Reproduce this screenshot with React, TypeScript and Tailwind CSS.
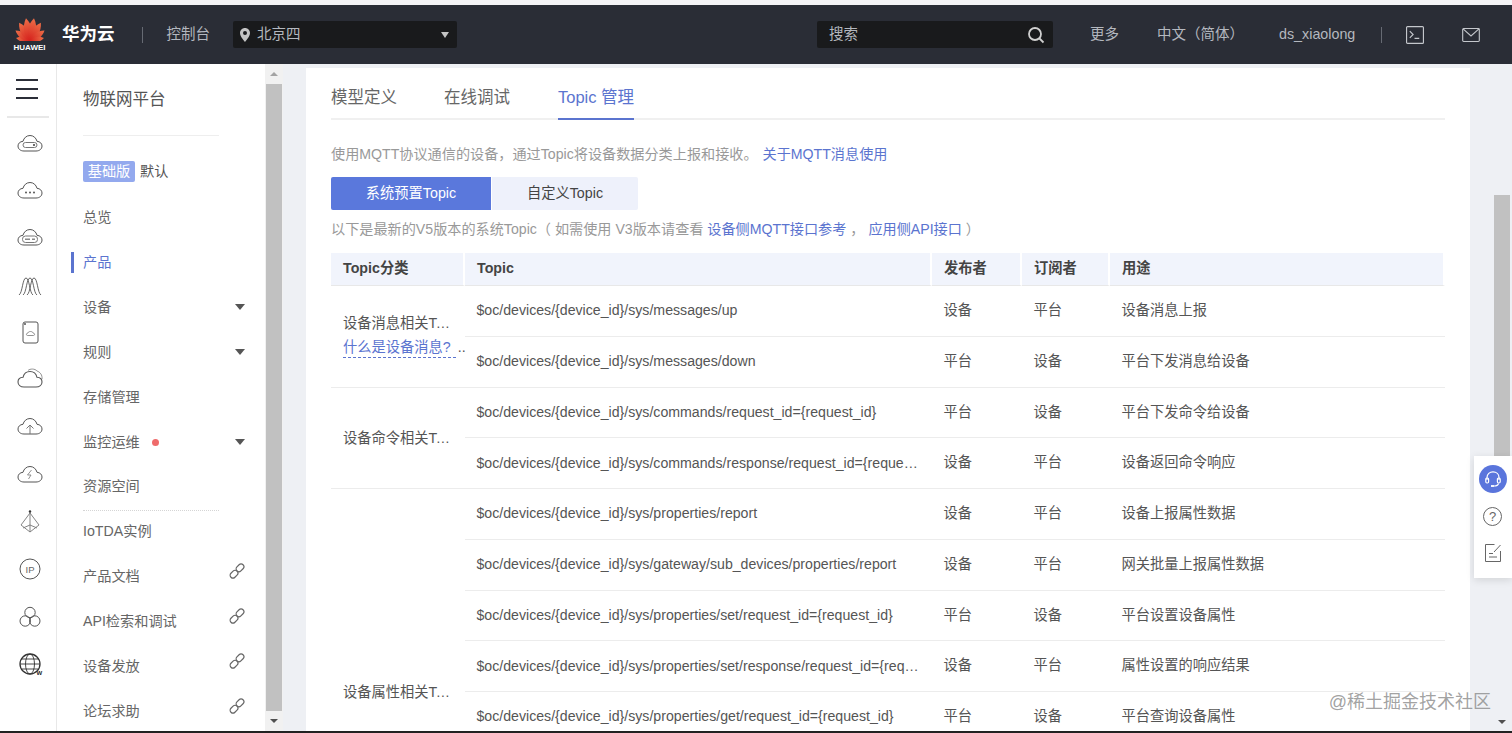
import React from "react";

const cloud = "M8 21C4.5 21 2 19 2 16C2 13.5 4 11.5 7 11.3C7.8 8 10.5 5.5 14 5.5C17.5 5.5 20.2 8 21 11.3C24 11.5 26 13.5 26 16C26 19 23.5 21 20 21Z";

function RailIcon({ children }: { children: React.ReactNode }) {
  return (
    <div className="flex h-[47.3px] items-center justify-center pl-[3px]">
      <svg width="28" height="28" viewBox="0 0 28 28" fill="none" stroke="#555" strokeWidth="1">
        {children}
      </svg>
    </div>
  );
}

function Rail() {
  return (
    <div className="w-[57px] shrink-0 border-r border-[#e8e8e8] bg-white">
      <div className="mx-[7px] flex h-[54px] flex-col items-center justify-center gap-[6.5px] border-b-2 border-[#e8e8e8] pb-[2px] pr-[2px]">
        <div className="h-[2.5px] w-[22px] bg-[#2b2e38]" />
        <div className="h-[2.5px] w-[22px] bg-[#2b2e38]" />
        <div className="h-[2.5px] w-[22px] bg-[#2b2e38]" />
      </div>
      <div className="pt-[2px]">
        <RailIcon>
          <path d={cloud} />
          <rect x="7" y="12.5" width="14" height="5" rx="2.5" stroke="#777" />
          <circle cx="18" cy="15" r="0.7" fill="#555" />
        </RailIcon>
        <RailIcon>
          <path d={cloud} />
          <circle cx="10" cy="15.5" r="1" fill="#555" stroke="none" />
          <circle cx="14" cy="15.5" r="1" fill="#555" stroke="none" />
          <circle cx="18" cy="15.5" r="1" fill="#555" stroke="none" />
        </RailIcon>
        <RailIcon>
          <path d={cloud} />
          <rect x="6.5" y="12" width="15" height="6.5" rx="3" stroke="#777" />
          <path d="M9 15.2h5M16 15.2h3" stroke="#888" strokeWidth="1.4" />
        </RailIcon>
        <RailIcon>
          <path d="M3 23C6.5 21 6.5 6 10 6C13.5 6 13.5 21 17 23M7 23C10.5 21 10.5 6 14 6C17.5 6 17.5 21 21 23M11 23C14.5 21 14.5 6 18 6C21.5 6 21.5 21 25 23" strokeWidth="0.9" />
        </RailIcon>
        <RailIcon>
          <rect x="7" y="3" width="15" height="21" rx="2" />
          <circle cx="9" cy="5" r="0.6" fill="#555" />
          <path d="M11.5 16.5C10 16.5 10 14 12 14C12.3 12 16.7 12 17 14C19 14 19 16.5 17.5 16.5Z" strokeWidth="0.8" stroke="#777" />
        </RailIcon>
        <RailIcon>
          <path d="M12 4.5C14 2.5 19 2.5 21 5C24 6 26.5 9 26 13" strokeWidth="0.9" stroke="#888" />
          <path d={cloud} strokeWidth="1.1" />
        </RailIcon>
        <RailIcon>
          <path d={cloud} />
          <path d="M14 21V12M10.5 15.5L14 12L17.5 15.5" stroke="#777" />
        </RailIcon>
        <RailIcon>
          <path d={cloud} />
          <path d="M15.5 9L11.5 14H15L12.5 18" strokeWidth="0.8" stroke="#777" />
        </RailIcon>
        <RailIcon>
          <path d="M14 3V24M14 5L5 17L14 24L23 17L14 5M14 17L7 20M14 17L21 20" strokeWidth="0.9" stroke="#777" />
          <circle cx="14" cy="3.5" r="1.2" fill="#333" stroke="none" />
        </RailIcon>
        <RailIcon>
          <circle cx="14" cy="14" r="10" />
          <text x="14" y="17.5" textAnchor="middle" fontSize="9.5" fill="#666" stroke="none" fontFamily="Liberation Sans">IP</text>
        </RailIcon>
        <RailIcon>
          <circle cx="14" cy="9.5" r="5.2" />
          <circle cx="9.2" cy="18" r="5.2" />
          <circle cx="18.8" cy="18" r="5.2" />
        </RailIcon>
        <RailIcon>
          <circle cx="14" cy="14" r="10" strokeWidth="1.3" stroke="#333" />
          <ellipse cx="14" cy="14" rx="4.5" ry="10" strokeWidth="0.9" stroke="#333" />
          <path d="M4 14H24M5.5 9H22.5M5.5 19H22.5" strokeWidth="0.9" stroke="#333" />
          <text x="20.5" y="24.5" fontSize="6" fontWeight="700" fill="#222" stroke="none" fontFamily="Liberation Sans">W</text>
        </RailIcon>
      </div>
    </div>
  );
}

function Caret() {
  return <div className="h-0 w-0 border-x-[5px] border-t-[6px] border-x-transparent border-t-[#555]" />;
}

function ChainIcon() {
  return (
    <svg width="16" height="16" viewBox="0 0 16 16" fill="none" stroke="#666" strokeWidth="1.2" className="-translate-y-[6px]">
      <rect x="8.2" y="0.5" width="5.6" height="8.6" rx="2.8" transform="rotate(45 11 4.8)" />
      <rect x="2.2" y="6.9" width="5.6" height="8.6" rx="2.8" transform="rotate(45 5 11.2)" />
    </svg>
  );
}

function MenuRow({ label, active, right, dot }: { label: string; active?: boolean; right?: React.ReactNode; dot?: boolean }) {
  return (
    <div className={`relative flex h-[44.95px] items-center pr-[20px] text-[14.2px] ${active ? "text-[#5b74cf]" : "text-[#666]"}`}>
      {active && <div className="absolute left-[-12px] top-[12px] h-[21px] w-[2.5px] bg-[#5b74cf]" />}
      <span>{label}</span>
      {dot && <span className="ml-[12px] h-[7px] w-[7px] rounded-full bg-[#ef6b6b]" />}
      {right && <div className="ml-auto">{right}</div>}
    </div>
  );
}

function Sidebar() {
  return (
    <div className="w-[208px] shrink-0 bg-white pl-[26px]">
      <div className="flex h-[72px] w-[136px] items-center border-b border-[#eeeeee] text-[16.5px] text-[#555]">物联网平台</div>
      <div className="flex h-[59px] items-center gap-[5px] pt-[12px] text-[14.2px] text-[#555]">
        <span className="flex h-[21px] w-[52px] items-center justify-center rounded-[2px] bg-[#93a9ee] text-white">基础版</span>
        <span>默认</span>
      </div>
      <MenuRow label="总览" />
      <MenuRow label="产品" active />
      <MenuRow label="设备" right={<Caret />} />
      <MenuRow label="规则" right={<Caret />} />
      <MenuRow label="存储管理" />
      <MenuRow label="监控运维" dot right={<Caret />} />
      <MenuRow label="资源空间" />
      <div className="-mb-px w-[136px] border-t border-dotted border-[#d5d5d5]" />
      <MenuRow label="IoTDA实例" />
      <MenuRow label="产品文档" right={<ChainIcon />} />
      <MenuRow label="API检索和调试" right={<ChainIcon />} />
      <MenuRow label="设备发放" right={<ChainIcon />} />
      <MenuRow label="论坛求助" right={<ChainIcon />} />
    </div>
  );
}

function SidebarScroll() {
  return (
    <div className="flex w-[18px] shrink-0 flex-col items-center bg-[#f1f1f1]">
      <div className="flex h-[20px] w-full items-center justify-center">
        <div className="h-0 w-0 border-x-[4px] border-b-[4px] border-x-transparent border-b-[#a3a3a3]" />
      </div>
      <div className="w-[16px] flex-1 bg-[#c1c1c1]" />
      <div className="flex h-[20px] w-full items-center justify-center">
        <div className="h-0 w-0 border-x-[4px] border-t-[4px] border-x-transparent border-t-[#505050]" />
      </div>
    </div>
  );
}

type Row = { topic: string; pub: string; sub: string; use: string };

const groups: { name: string; link?: string; rows: Row[] }[] = [
  {
    name: "设备消息相关Topic",
    link: "什么是设备消息?",
    rows: [
      { topic: "$oc/devices/{device_id}/sys/messages/up", pub: "设备", sub: "平台", use: "设备消息上报" },
      { topic: "$oc/devices/{device_id}/sys/messages/down", pub: "平台", sub: "设备", use: "平台下发消息给设备" },
    ],
  },
  {
    name: "设备命令相关Topic",
    rows: [
      { topic: "$oc/devices/{device_id}/sys/commands/request_id={request_id}", pub: "平台", sub: "设备", use: "平台下发命令给设备" },
      { topic: "$oc/devices/{device_id}/sys/commands/response/request_id={request_id}", pub: "设备", sub: "平台", use: "设备返回命令响应" },
    ],
  },
  {
    name: "设备属性相关Topic",
    rows: [
      { topic: "$oc/devices/{device_id}/sys/properties/report", pub: "设备", sub: "平台", use: "设备上报属性数据" },
      { topic: "$oc/devices/{device_id}/sys/gateway/sub_devices/properties/report", pub: "设备", sub: "平台", use: "网关批量上报属性数据" },
      { topic: "$oc/devices/{device_id}/sys/properties/set/request_id={request_id}", pub: "平台", sub: "设备", use: "平台设置设备属性" },
      { topic: "$oc/devices/{device_id}/sys/properties/set/response/request_id={request_id}", pub: "设备", sub: "平台", use: "属性设置的响应结果" },
      { topic: "$oc/devices/{device_id}/sys/properties/get/request_id={request_id}", pub: "平台", sub: "设备", use: "平台查询设备属性" },
    ],
  },
];

function TopicTable() {
  const th = "h-[33px] border-r-2 border-b border-r-white border-b-[#e8e8e8] bg-[#f1f4fc] px-[12px] pb-[1px] text-left text-[14.25px] font-bold text-[#444]";
  const td = "h-[50.75px] border-b border-[#ececec] pl-[11.5px] pr-[12px] text-[14.25px] text-[#555] truncate";
  const topicTd = "h-[50.75px] border-b border-[#ececec] pl-[11.5px] pr-[8px] text-[14.15px] text-[#555] truncate";
  return (
    <table className="w-[1114px] table-fixed border-separate border-spacing-0">
      <colgroup>
        <col className="w-[134px]" />
        <col className="w-[467px]" />
        <col className="w-[90px]" />
        <col className="w-[88px]" />
        <col className="w-[335px]" />
      </colgroup>
      <thead>
        <tr>
          <th className={th}>Topic分类</th>
          <th className={th}>Topic</th>
          <th className={th}>发布者</th>
          <th className={th}>订阅者</th>
          <th className={`${th} border-r-0`}>用途</th>
        </tr>
      </thead>
      <tbody>
        {groups.map((g, gi) =>
          g.rows.map((r, i) => (
            <tr key={r.topic}>
              {i === 0 && (
                <td
                  rowSpan={g.rows.length}
                  className={`border-b border-[#ececec] pl-[12px] text-[14.25px] text-[#555] ${gi === 2 ? "align-top pt-[192px]" : gi === 0 ? "pb-[3px]" : ""}`}
                >
                  <div className="w-[107px] truncate leading-[22px]">{g.name}</div>
                  {g.link && (
                    <div className="whitespace-nowrap pt-[2px] leading-[22px] text-[#5b74cf]">
                      <span className="border-b border-dashed border-[#5b74cf] pb-[2px] pr-[5px]">{g.link}</span>
                      <span className="pl-[2px] text-[#555]">..</span>
                    </div>
                  )}
                </td>
              )}
              <td className={topicTd}>{r.topic}</td>
              <td className={td}>{r.pub}</td>
              <td className={td}>{r.sub}</td>
              <td className={td}>{r.use}</td>
            </tr>
          ))
        )}
      </tbody>
    </table>
  );
}

function HelpWidget() {
  return (
    <div className="absolute right-0 top-[392px] flex h-[122px] w-[38px] flex-col items-center bg-white pr-[1px] pt-[9px] shadow-[0_2px_8px_rgba(0,0,0,0.12)]">
      <div className="flex h-[28px] w-[28px] items-center justify-center rounded-full bg-[#5a75dc]">
        <svg width="18" height="18" viewBox="0 0 18 18" fill="none" stroke="#fff" strokeWidth="1.2">
          <path d="M3 10V7.5C3 4 5.7 1.8 9 1.8C12.3 1.8 15 4 15 7.5V10" />
          <rect x="1.8" y="8" width="2.8" height="5" rx="1.2" />
          <rect x="13.4" y="8" width="2.8" height="5" rx="1.2" />
          <path d="M14.5 13.5C14 15.5 12.5 16 10 16" />
          <path d="M7 16H10" strokeWidth="1.8" />
        </svg>
      </div>
      <div className="mt-[14px] flex h-[19px] w-[19px] items-center justify-center rounded-full border border-[#666] font-['Liberation_Sans'] text-[13px] text-[#666]">?</div>
      <svg width="18" height="20" viewBox="0 0 18 20" fill="none" stroke="#666" strokeWidth="1" className="mt-[17px]">
        <path d="M10.5 1.5H1.5V18.5H16.5V8" />
        <path d="M10 9L16.5 2" />
        <path d="M5 10.5H9M5 14H13" />
      </svg>
    </div>
  );
}

const petals: [number, number][] = [
  [-78, 0.62], [-54, 0.78], [-31, 0.92], [-10, 1],
  [10, 1], [31, 0.92], [54, 0.78], [78, 0.62],
];

function Header() {
  return (
    <div className="flex h-[59px] shrink-0 items-center bg-[#2a2d36] text-[14.5px] text-[#b4b8bf]">
      <div className="ml-[14px] flex w-[31px] flex-col items-center">
        <svg width="30" height="24" viewBox="0 0 30 24">
          <defs>
            <linearGradient id="petal" x1="0" y1="0" x2="0" y2="1">
              <stop offset="0" stopColor="#ec6f48" />
              <stop offset="1" stopColor="#d5201c" />
            </linearGradient>
          </defs>
          {petals.map(([a, s]) => (
            <path
              key={a}
              d="M15 24C9.5 18 9.5 9 15 1C20.5 9 20.5 18 15 24Z"
              fill="url(#petal)"
              transform={`rotate(${a} 15 24) translate(15 24) scale(${s}) translate(-15 -24)`}
            />
          ))}
        </svg>
        <span className="mt-[1px] whitespace-nowrap text-[8px] font-bold leading-[11px] text-white">HUAWEI</span>
      </div>
      <span className="ml-[17px] text-[17.5px] font-bold text-white">华为云</span>
      <div className="ml-[27px] h-[16px] w-px bg-[#666a73]" />
      <span className="ml-[24px]">控制台</span>
      <div className="ml-[23px] flex h-[27px] w-[224px] items-center rounded-[2px] bg-[#191a1c] pl-[7px] pr-[8px]">
        <svg width="10" height="14" viewBox="0 0 10 14" fill="#c4c4c4">
          <path fillRule="evenodd" d="M5 0C2.2 0 0 2.2 0 5C0 8.5 5 14 5 14C5 14 10 8.5 10 5C10 2.2 7.8 0 5 0ZM5 3A2 2 0 1 1 5 7A2 2 0 0 1 5 3Z" />
        </svg>
        <span className="ml-[7px]">北京四</span>
        <div className="ml-auto h-0 w-0 border-x-[4px] border-t-[6px] border-x-transparent border-t-[#c4c4c4]" />
      </div>
      <div className="ml-[360px] flex h-[27px] w-[236px] items-center rounded-[2px] bg-[#191a1c] pl-[12px] pr-[8px]">
        <span>搜索</span>
        <svg width="18" height="18" viewBox="0 0 18 18" fill="none" stroke="#d0d0d0" strokeWidth="1.8" className="ml-auto">
          <circle cx="8" cy="8" r="6" />
          <path d="M12.5 12.5L16.5 16.5" />
        </svg>
      </div>
      <span className="ml-[37px]">更多</span>
      <span className="ml-[38px]">中文（简体）</span>
      <span className="ml-[35px] text-[14.3px]">ds_xiaolong</span>
      <div className="ml-[26px] h-[16px] w-px bg-[#666a73]" />
      <svg width="18" height="18" viewBox="0 0 19 19" fill="none" stroke="#c4c7cc" strokeWidth="1.2" className="ml-[24px]">
        <rect x="0.6" y="0.6" width="17.8" height="17.8" rx="1" />
        <path d="M4 5.5L7.5 9L4 12.5M9 13H14" />
      </svg>
      <svg width="18" height="14" viewBox="0 0 19 15" fill="none" stroke="#c4c7cc" strokeWidth="1.2" className="ml-[38px]">
        <rect x="0.6" y="0.6" width="17.8" height="13.8" rx="1" />
        <path d="M1 1L9.5 8.5L18 1" />
      </svg>
    </div>
  );
}

export default function App() {
  return (
    <div className="flex h-[733px] w-[1512px] flex-col overflow-hidden bg-white font-['Liberation_Sans','Noto_Sans_CJK_SC',sans-serif]">
      <div className="h-[5px] shrink-0 bg-[#f4f4f6]" />
      <Header />
      <div className="flex h-[667px] shrink-0 overflow-hidden">
        <Rail />
        <Sidebar />
        <SidebarScroll />
        <div className="relative flex-1 overflow-hidden bg-[#eef0f4] pl-[23px] pt-[4px]">
          <div className="h-[700px] w-[1164px] overflow-hidden bg-white px-[25px]">
            <div className="flex h-[52px] border-b-2 border-[#f0f0f0] text-[16.5px] text-[#666]">
              <span className="pt-[17px]">模型定义</span>
              <span className="ml-[47px] pt-[17px]">在线调试</span>
              <span className="-mb-[2px] ml-[48px] border-b-2 border-[#5b74cf] pt-[17px] text-[#5b74cf]">Topic 管理</span>
            </div>
            <div className="pt-[23px] text-[14.15px] leading-[22px] text-[#999]">
              使用MQTT协议通信的设备，通过Topic将设备数据分类上报和接收。 <span className="ml-[1px] text-[#5b74cf]">关于MQTT消息使用</span>
            </div>
            <div className="mt-[12px] flex h-[33px] gap-px text-[14.25px]">
              <div className="flex w-[160px] items-center justify-center rounded-l-[2px] bg-[#5a78dc] text-white">系统预置Topic</div>
              <div className="flex w-[146px] items-center justify-center rounded-r-[2px] bg-[#eef1fb] text-[#444]">自定义Topic</div>
            </div>
            <div className="flex h-[38px] items-center whitespace-pre pt-[2px] text-[14.15px] text-[#999]">
              以下是最新的V5版本的系统Topic（ 如需使用 V3版本请查看 <span className="text-[#5b74cf]">设备侧MQTT接口参考</span> ， <span className="text-[#5b74cf]">应用侧API接口</span> ）
            </div>
            <div className="mt-[5px]">
              <TopicTable />
            </div>
          </div>
          {/* page scrollbar */}
          <div className="absolute right-[2px] top-[131px] h-[320px] w-[16px] bg-[#c1c1c1]" />
          <div className="absolute bottom-[7px] right-[6px] h-0 w-0 border-x-[4px] border-t-[4px] border-x-transparent border-t-[#505050]" />
          <HelpWidget />
          <div className="absolute right-[21px] top-[627px] whitespace-nowrap text-[18px] leading-[22px] text-[#8a8a8a]/80">@稀土掘金技术社区</div>
        </div>
      </div>
      <div className="h-[2px] shrink-0 bg-[#222]" />
    </div>
  );
}
